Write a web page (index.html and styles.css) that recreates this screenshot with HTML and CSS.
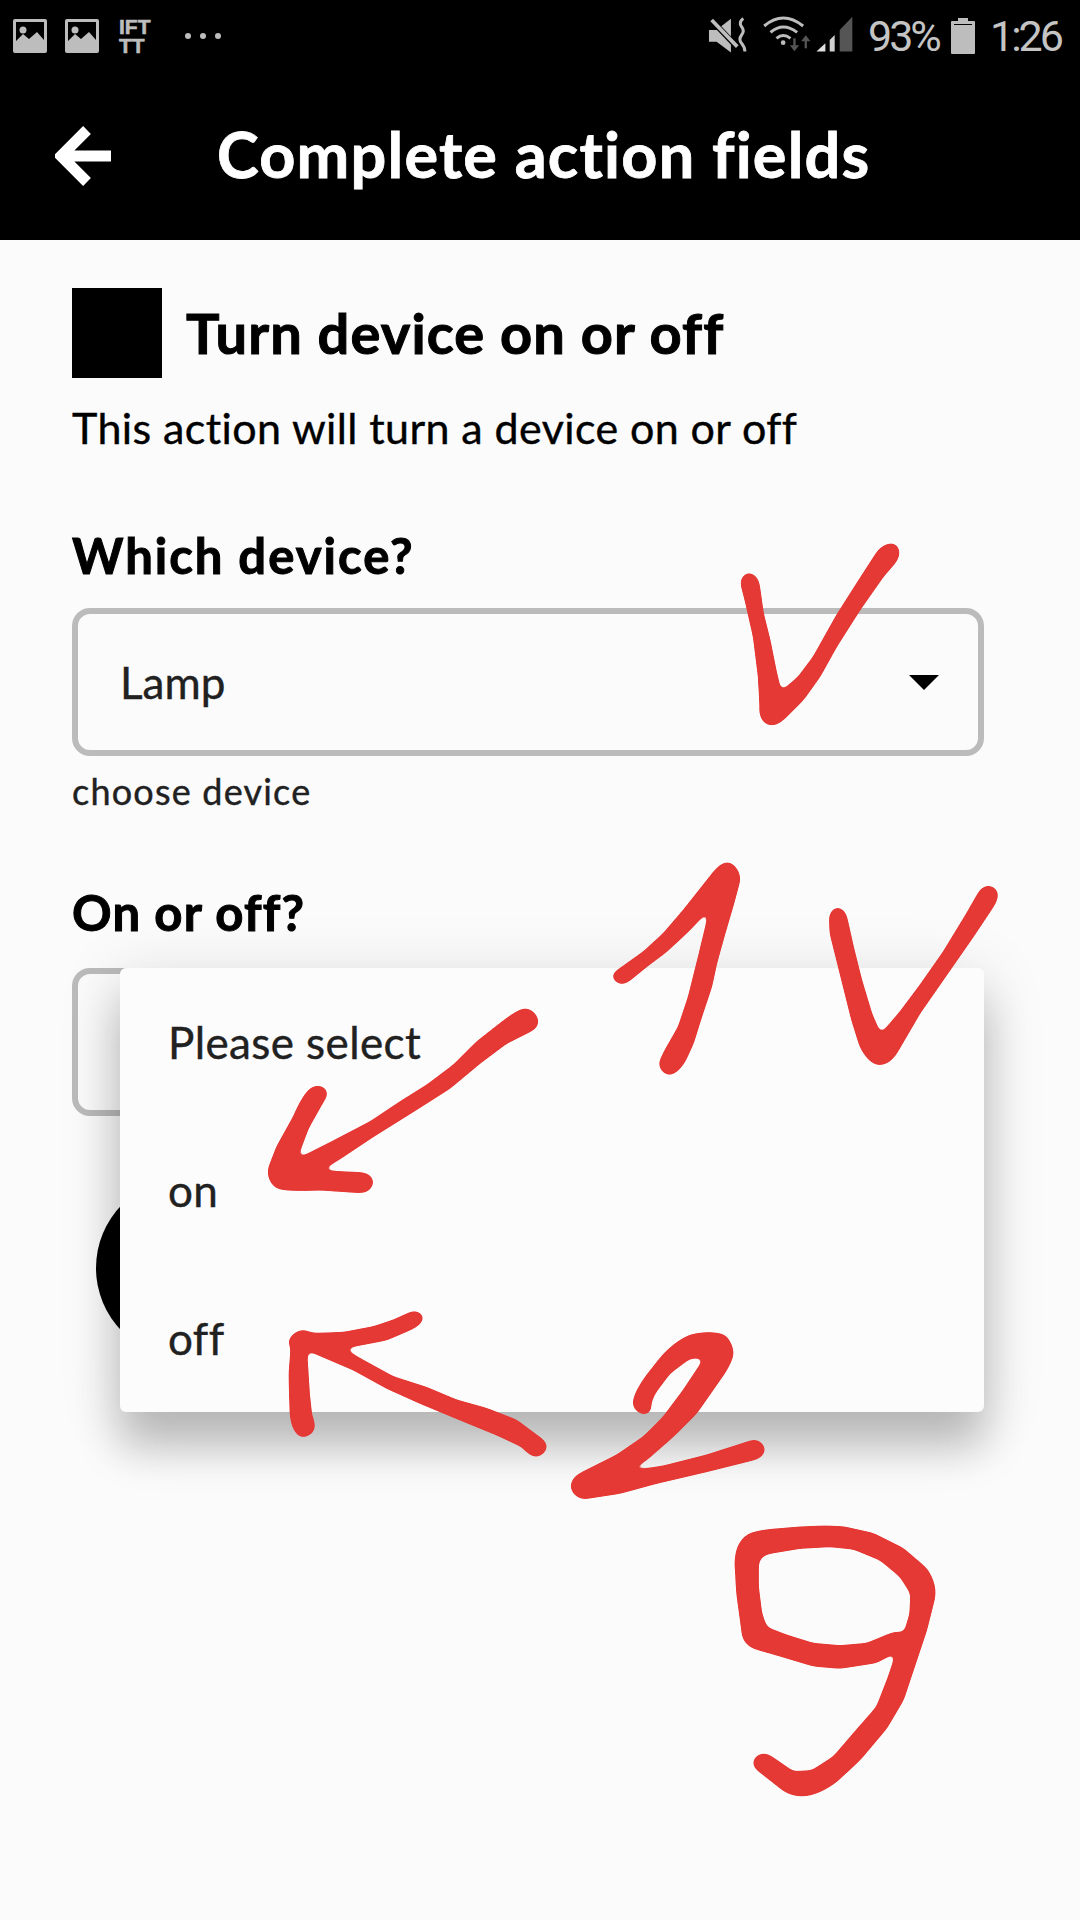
FILE: index.html
```html
<!DOCTYPE html>
<html lang="en">
<head>
    <meta charset="UTF-8">
    <meta name="viewport" content="width=device-width, initial-scale=1.0">
    <title>Complete action fields</title>
    <link rel="stylesheet" href="styles.css">
</head>
<body>
    <header class="top">
        <div class="status-bar">
            <div class="status-left">
                <svg class="pic-icon" viewBox="0 0 34 34"><path fill="#bdbdbd" fill-rule="evenodd" d="M2,0H32Q34,0 34,2V32Q34,34 32,34H2Q0,34 0,32V2Q0,0 2,0ZM3,3V22L10,15L16,20L24,13L31,21V3Z"/><circle cx="10" cy="11" r="3.5" fill="#bdbdbd"/></svg>
                <svg class="pic-icon" viewBox="0 0 34 34"><path fill="#bdbdbd" fill-rule="evenodd" d="M2,0H32Q34,0 34,2V32Q34,34 32,34H2Q0,34 0,32V2Q0,0 2,0ZM3,3V22L10,15L16,20L24,13L31,21V3Z"/><circle cx="10" cy="11" r="3.5" fill="#bdbdbd"/></svg>
                <div class="ifttt">IFTTT</div>
                <div class="dots"><span></span><span></span><span></span></div>
            </div>
            <div class="status-right">
                <svg class="net-icons" viewBox="0 0 460 180">
                    <!-- mute speaker, coords are 3x -->
                    <path fill="#bdbdbd" d="M27,90V125H50L93,158V56L62,80L50,90Z"/>
                    <path stroke="#000" stroke-width="17" d="M25,50L120,150"/>
                    <path stroke="#bdbdbd" stroke-width="11" d="M35,60L112,140"/>
                    <path fill="none" stroke="#bdbdbd" stroke-width="9" d="M130,55Q115,68 125,80T125,105T125,130T135,155"/>
                    <!-- wifi -->
                    <g fill="none" stroke="#bdbdbd" stroke-width="9">
                        <path d="M193,78Q250,30 310,78"/>
                        <path d="M212,97Q250,65 292,97"/>
                        <path d="M230,115Q250,98 272,115"/>
                    </g>
                    <circle cx="250" cy="128" r="7" fill="#bdbdbd"/>
                    <path stroke="#555" stroke-width="7" d="M284,115V148"/>
                    <path fill="#555" d="M270,136H298L284,154Z"/>
                    <path stroke="#555" stroke-width="7" d="M318,145V115"/>
                    <path fill="#555" d="M304,124H332L318,106Z"/>
                    <!-- signal -->
                    <path fill="#e0e0e0" d="M350,155H377V130Z"/>
                    <path fill="#d0d0d0" d="M390,155H405V105L390,120Z"/>
                    <path fill="#555" d="M420,155H458V50L420,90Z"/>
                </svg>
                <span class="status-text pct">93%</span>
                <svg class="battery" viewBox="0 0 24 36"><path fill="#bdbdbd" fill-rule="evenodd" d="M7,0H17V3H23Q24,3 24,4V35Q24,36 23,36H1Q0,36 0,35V4Q0,3 1,3H7ZM3,6V7H21V6Z"/></svg>
                <span class="status-text time">1:26</span>
            </div>
        </div>
        <div class="app-bar">
            <svg class="back-arrow" viewBox="0 0 58 60"><path fill="none" stroke="#fff" stroke-width="11" d="M32,4L6,30L32,56M7,30H56"/></svg>
            <h1>Complete action fields</h1>
        </div>
    </header>

    <main class="content">
        <div class="action-head">
            <div class="action-icon"></div>
            <h2>Turn device on or off</h2>
        </div>
        <p class="action-desc">This action will turn a device on or off</p>

        <label class="field-label first">Which device?</label>
        <div class="select">
            <span>Lamp</span>
            <i class="caret"></i>
        </div>
        <p class="helper">choose device</p>

        <label class="field-label second">On or off?</label>
        <div class="select-wrap">
            <div class="select"></div>
            <ul class="menu">
                <li>Please select</li>
                <li>on</li>
                <li>off</li>
            </ul>
        </div>
        <div class="finish-btn"></div>
    </main>

    <!-- red pen marks, each group uses the 3x coords it was measured in -->
    <svg class="scribble" viewBox="0 0 1080 1920">
        <filter id="pen" filterUnits="userSpaceOnUse" x="0" y="0" width="1080" height="1920" color-interpolation-filters="sRGB">
            <feGaussianBlur stdDeviation="3"/>
            <feComponentTransfer><feFuncA type="linear" slope="10" intercept="-4.5"/></feComponentTransfer>
        </filter>
        <g filter="url(#pen)" fill="#e53935" stroke="#e53935" stroke-width="3" stroke-linejoin="round" fill-rule="evenodd">
            <g transform="translate(720 520) scale(.3333)">
                <path d="M62,190Q65,160 88,159Q115,165 118,195L130,280L150,360L168,450L183,515L235,470L280,410L350,285L420,175L475,90Q505,62 530,75Q548,100 525,130L490,170L420,270L350,380L300,470L250,540L190,600Q160,625 135,610Q115,590 120,560L115,470L100,350L75,240Z"/>
            </g>
            <g transform="translate(600 850) scale(.3333)">
                <path d="M36,380Q40,365 60,355L130,305L190,250L250,180L345,60Q370,30 395,40Q420,60 420,90L400,165L375,250L350,340L335,410L305,500L280,580L255,635Q230,675 205,675Q175,665 178,635L195,600L235,530L265,440L295,320L330,175L270,240L200,305L140,350L85,395Q55,415 36,380Z"/>
                <path d="M688,200Q695,172 715,173Q735,178 740,200L760,290L785,390L815,490L842,553L900,485L960,405L1030,305L1100,190L1140,120Q1165,95 1190,120Q1200,140 1180,170L1120,260L1040,375L960,490L890,610Q870,645 835,645Q805,640 780,590L755,510L730,410L705,310L690,250Z"/>
            </g>
            <g transform="translate(260 1000) scale(.3333)">
                <path d="M835,65Q830,30 795,25Q770,30 720,70L650,125L580,195L500,255L420,305L330,365L215,425L110,478L145,385L190,305Q210,280 195,265Q175,250 150,265Q125,290 100,350L50,440L25,505Q20,545 50,565Q90,575 180,570L300,578Q335,580 340,545Q335,520 305,518L180,512L235,480L340,410L460,335L570,265L660,190L740,130L810,95Q835,85 835,65Z"/>
            </g>
            <g transform="translate(280 1300) scale(.3333)">
                <path d="M25,125Q35,95 70,90L100,100L190,97L280,80L340,60L395,35Q425,30 430,55Q425,75 390,90L320,120L190,145L240,175L340,230L440,262L530,300L620,325L710,360L770,405Q805,425 800,445Q790,470 765,470Q745,465 725,440L650,405L540,360L420,310L320,265L220,210L80,150L88,280L95,345Q110,380 100,395Q80,415 60,410Q35,395 30,340L27,220L33,145Z"/>
                <path d="M1060,300Q1070,260 1120,200Q1170,130 1230,105Q1290,90 1335,105Q1360,130 1360,165Q1350,200 1320,240L1250,340L1180,410L1100,480L1040,515L1150,498L1280,465L1420,420Q1450,420 1455,450Q1450,475 1420,480L1280,515L1130,550L1020,580L910,597Q880,590 873,565Q870,535 900,520L1010,465L1090,410L1150,350L1210,270L1275,172L1230,175L1170,220L1125,280L1112,310Q1118,335 1100,342Q1075,345 1060,320Z"/>
            </g>
            <g transform="translate(700 1480) scale(.3333)">
                <path d="M105,250Q105,190 140,165Q165,150 250,145Q350,135 430,140L520,160L610,205L680,265Q710,310 705,350L680,450L640,570L610,660L560,745L480,840L410,905Q350,950 300,948Q260,945 235,920L165,865Q150,840 175,825Q195,815 215,830L280,875L335,872L400,830L460,760L530,680L565,590L590,515L530,548L420,565L340,558L240,528L160,505Q125,490 125,450L110,340Z M175,250Q180,225 210,220L300,205L390,200L460,207L540,240L600,290L632,340L630,400L612,460Q590,450 560,465L500,490L420,497L340,490L260,465L200,442L185,400L175,320Z"/>
            </g>
        </g>
    </svg>
</body>
</html>
```

FILE: styles.css
```css
* {
    box-sizing: border-box;
}
html, body {
    margin: 0;
    padding: 0;
}
body {
    position: relative;
    width: 1080px;
    height: 1920px;
    overflow: hidden;
    background: #fbfbfb;
    font-family: Lato, "Open Sans", sans-serif;
    color: #000;
}

/* header */
.top {
    background: #000;
    height: 240px;
}
.status-bar {
    height: 72px;
    display: flex;
    justify-content: space-between;
    align-items: center;
    padding: 0 18px 0 13px;
}
.status-left {
    display: flex;
    align-items: center;
}
.pic-icon {
    width: 34px;
    height: 34px;
    margin-right: 18px;
}
.ifttt {
    width: 36px;
    margin-left: 2px;
    word-break: break-all;
    font-family: "Liberation Sans", sans-serif;
    font-weight: 700;
    font-size: 21px;
    line-height: 19px;
    color: #bdbdbd;
    -webkit-text-stroke: 0.6px #bdbdbd;
}
.dots {
    display: flex;
    gap: 9px;
    margin-left: 30px;
}
.dots span {
    width: 6px;
    height: 6px;
    border-radius: 50%;
    background: #bdbdbd;
}
.status-right {
    display: flex;
    align-items: center;
}
.net-icons {
    width: 153px;
    height: 60px;
    margin: 0 15px 12px 0;
}
.status-text {
    font-family: Roboto, sans-serif;
    font-weight: 400;
    font-size: 43px;
    line-height: 72px;
    color: #c4c4c4;
    letter-spacing: -3px;
}
.pct {
    width: 70px;
    white-space: nowrap;
}
.battery {
    width: 24px;
    height: 36px;
    margin: 0 15px 0 13px;
}
.time {
    width: 72px;
}
.app-bar {
    height: 168px;
    display: flex;
    align-items: center;
    padding-left: 55px;
}
.back-arrow {
    width: 58px;
    height: 60px;
    margin-right: 104px;
}
h1 {
    margin: 0 0 5px;
    color: #fff;
    font-size: 63px;
    font-weight: 700;
    line-height: 72px;
    letter-spacing: 1.2px;
    -webkit-text-stroke: 0.8px #fff;
}

/* form */
.content {
    padding: 48px 96px 0 72px;
}
.action-head {
    display: flex;
    align-items: center;
    gap: 24px;
}
.action-icon {
    width: 90px;
    height: 90px;
    background: #000;
}
h2 {
    margin: 0;
    font-size: 56px;
    font-weight: 700;
    line-height: 64px;
    letter-spacing: 1.1px;
    -webkit-text-stroke: 1px #000;
}
.action-desc {
    margin: 25px 0 0;
    font-size: 43px;
    font-weight: 400;
    line-height: 50px;
    letter-spacing: 0.4px;
    -webkit-text-stroke: 0.4px #000;
}
.field-label {
    display: block;
    font-size: 49px;
    font-weight: 700;
    line-height: 56px;
    -webkit-text-stroke: 1px #000;
}
.first {
    margin-top: 74px;
    letter-spacing: 2px;
}
.second {
    margin-top: 72px;
    letter-spacing: 1.2px;
}
.select {
    height: 148px;
    margin-top: 25px;
    display: flex;
    align-items: center;
    justify-content: space-between;
    padding: 0 39px 0 42px;
    border: 6px solid #bbb;
    border-radius: 18px;
    font-size: 44px;
    font-weight: 400;
    color: #212121;
    -webkit-text-stroke: 0.4px #212121;
}
.caret {
    width: 0;
    height: 0;
    border-left: 15px solid transparent;
    border-right: 15px solid transparent;
    border-top: 15px solid #000;
}
.helper {
    margin: 14px 0 0;
    font-size: 36px;
    font-weight: 400;
    line-height: 42px;
    letter-spacing: 1.2px;
    color: #212121;
    -webkit-text-stroke: 0.4px #212121;
}
.select-wrap {
    position: relative;
    margin-top: 28px;
}
.select-wrap .select {
    margin-top: 0;
}
.menu {
    position: absolute;
    top: 0;
    left: 48px;
    right: 0;
    margin: 0;
    padding: 0;
    list-style: none;
    background: #fcfcfc;
    border-radius: 6px;
    box-shadow: 0 36px 44px 0 rgba(0,0,0,0.22), 0 8px 60px 6px rgba(0,0,0,0.1);
}
.menu li {
    height: 148px;
    display: flex;
    align-items: center;
    padding-left: 48px;
    font-size: 44px;
    font-weight: 400;
    letter-spacing: 0.4px;
    color: #212121;
    -webkit-text-stroke: 0.4px #212121;
}
.finish-btn {
    height: 180px;
    margin: 62px 24px 0;
    border-radius: 90px;
    background: #000;
}

/* pen marks sit above everything */
.scribble {
    position: absolute;
    top: 0;
    left: 0;
    width: 1080px;
    height: 1920px;
}
```
